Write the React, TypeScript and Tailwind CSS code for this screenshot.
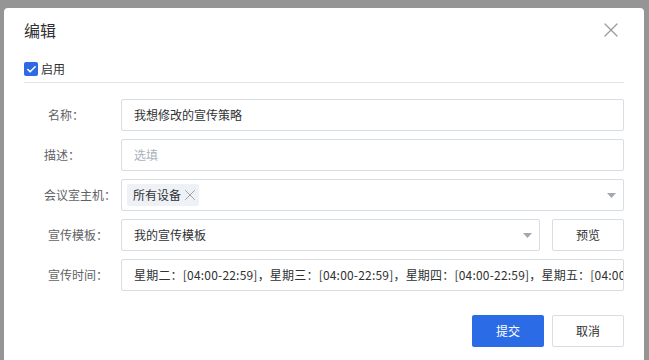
import { Check, X } from 'lucide-react';

const font = { fontFamily: '"Noto Sans CJK SC", "Noto Sans", sans-serif' };

function Arrow() {
  return (
    <svg width="9" height="5" viewBox="0 0 9 5" className="shrink-0">
      <path d="M0 0 L9 0 L4.5 5 Z" fill="#a3a7ae" />
    </svg>
  );
}

function Row({ label, pad, children }: { label: string; pad: string; children: React.ReactNode }) {
  return (
    <div className="flex items-center h-8">
      <div className={`w-[97px] shrink-0 text-[12px] text-[#606266] ${pad}`}>{label}</div>
      <div className="flex-1 flex items-center gap-3 h-8 min-w-0">{children}</div>
    </div>
  );
}

export default function App() {
  const schedule =
    '星期二：[04:00-22:59]，星期三：[04:00-22:59]，星期四：[04:00-22:59]，星期五：[04:00-22:59]，星期六：[04:00-22:59]';

  return (
    <div className="w-[649px] h-[360px] bg-[#959595] overflow-hidden pt-2 pl-1 pr-[5px]" style={font}>
      <div className="bg-white rounded-t-[4px] h-[400px] px-5 pt-[10px]">
        <div className="flex items-center justify-between h-6">
          <span className="text-[16px] text-[#303133]">编辑</span>
          <X className="w-6 h-6 mr-px text-[#9a9a9a]" strokeWidth={1.3} />
        </div>

        <div className="mt-[17px] pb-[3px] border-b border-[#dfe4ea]">
          <label className="flex items-center h-5 gap-[3px]">
            <span className="w-[14px] h-[14px] rounded-[2px] bg-[#2d6ae3] flex items-center justify-center">
              <Check className="w-[11px] h-[11px] text-white" strokeWidth={3.5} />
            </span>
            <span className="text-[12px] text-[#303133]">启用</span>
          </label>
        </div>

        <div className="mt-4 flex flex-col gap-2">
          <Row label="名称：" pad="pl-6">
            <div className="flex-1 h-8 border border-[#d8dce3] rounded-[2px] px-3 flex items-center text-[12px] text-[#303133]">
              我想修改的宣传策略
            </div>
          </Row>
          <Row label="描述：" pad="pl-5">
            <div className="flex-1 h-8 border border-[#d8dce3] rounded-[2px] px-3 flex items-center text-[12px] text-[#aab1bd]">
              选填
            </div>
          </Row>
          <Row label="会议室主机：" pad="pl-5">
            <div className="flex-1 h-8 border border-[#d8dce3] rounded-[2px] pl-[5px] pr-[7px] flex items-center justify-between">
              <span className="h-[22px] w-[72px] bg-[#eef1f6] rounded-[2px] pl-[6px] flex items-center gap-0 text-[12px] text-[#303133]">
                所有设备
                <X className="w-[18px] h-[18px] text-[#9aa0a8]" strokeWidth={1.3} />
              </span>
              <Arrow />
            </div>
          </Row>
          <Row label="宣传模板：" pad="pl-6">
            <div className="flex-1 h-8 border border-[#d8dce3] rounded-[2px] pl-3 pr-[7px] flex items-center justify-between text-[12px] text-[#303133]">
              我的宣传模板
              <Arrow />
            </div>
            <button className="w-[72px] h-8 shrink-0 border border-[#d8dce3] rounded-[2px] text-[12px] text-[#303133] bg-white">
              预览
            </button>
          </Row>
          <Row label="宣传时间：" pad="pl-6">
            <div className="flex-1 h-8 border border-[#d8dce3] rounded-[2px] pl-3 flex items-center overflow-hidden min-w-0">
              <span className="whitespace-nowrap text-[12px] tracking-[0.2px] text-[#303133]">{schedule}</span>
            </div>
          </Row>
        </div>

        <div className="mt-6 flex justify-end gap-2">
          <button className="w-[72px] h-8 rounded-[2px] bg-[#2b6be6] text-white text-[12px]">提交</button>
          <button className="w-[72px] h-8 rounded-[2px] border border-[#d8dce3] bg-white text-[#303133] text-[12px]">
            取消
          </button>
        </div>
      </div>
    </div>
  );
}
